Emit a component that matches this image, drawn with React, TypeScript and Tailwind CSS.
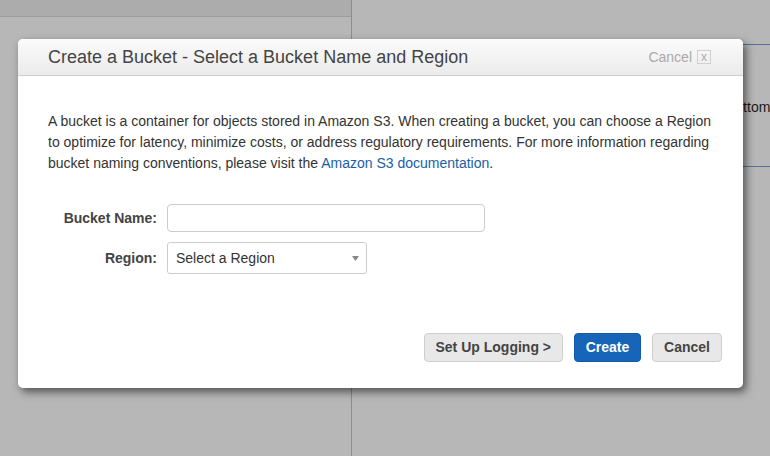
import React from "react";

export default function App() {
  return (
    <div
      className="relative w-[770px] h-[456px] overflow-hidden bg-[#b7b7b7] flex"
      style={{ fontFamily: '"Liberation Sans", Arial, sans-serif' }}
    >
      {/* background left column */}
      <div className="w-[352px] shrink-0 h-full border-r border-[#8c8c8c] flex flex-col">
        <div className="h-[17px] bg-[#acacac] border-b border-[#9c9c9c]" />
      </div>
      {/* background right column */}
      <div className="flex-1 min-w-0 pt-[44px] overflow-hidden">
        <div className="h-[123px] border-t border-b border-[#5a6f96] flex items-center pl-[374px] pt-[4px]">
          <span className="text-[14px] text-[#1a1a1a] whitespace-nowrap">Bottom</span>
        </div>
      </div>

      {/* modal overlay */}
      <div className="absolute left-[18px] top-[39px] w-[725px] h-[349px] bg-white rounded-[5px] shadow-[3px_4px_8px_rgba(0,0,0,0.55)] flex flex-col overflow-hidden">
        <div className="h-[37px] shrink-0 bg-gradient-to-b from-[#fbfbfb] to-[#ebebeb] border-b border-[#cfcfcf] flex items-center justify-between pl-[30px] pr-[32px]">
          <span className="text-[18px] text-[#444]">
            Create a Bucket - Select a Bucket Name and Region
          </span>
          <span className="flex items-center gap-[5px] text-[14px] text-[#aaa]">
            Cancel
            <span className="w-[14px] h-[14px] border border-[#d0d0d0] flex items-center justify-center text-[12px] leading-none text-[#aaa] pb-[1px]">
              x
            </span>
          </span>
        </div>
        <div className="flex-1 flex flex-col px-[30px] pt-[35px]">
          <p className="text-[14px] leading-[21px] text-[#333]">
            A bucket is a container for objects stored in Amazon S3. When creating a bucket, you can choose a Region
            to optimize for latency, minimize costs, or address regulatory requirements. For more information regarding
            bucket naming conventions, please visit the{" "}
            <span className="text-[#1a5ea8]">Amazon S3 documentation</span>.
          </p>
          <div className="mt-[30px] flex flex-col gap-[10px]">
            <div className="flex items-center gap-[10px]">
              <span className="w-[109px] text-right text-[14px] font-bold text-[#444]">Bucket Name:</span>
              <div className="w-[318px] h-[28px] border border-[#cccccc] rounded-[4px] bg-white" />
            </div>
            <div className="flex items-center gap-[10px]">
              <span className="w-[109px] text-right text-[14px] font-bold text-[#444]">Region:</span>
              <div className="w-[200px] h-[32px] border border-[#cccccc] rounded-[3px] bg-white flex items-center justify-between pl-[8px] pr-[7px]">
                <span className="text-[14px] text-[#333]">Select a Region</span>
                <svg width="7" height="5" viewBox="0 0 7 5">
                  <path d="M0 0 H7 L3.5 5 Z" fill="#888" />
                </svg>
              </div>
            </div>
          </div>
          <div className="mt-auto mb-[26px] flex justify-end gap-[11px] -mr-[9px]">
            <button className="h-[29px] px-[11px] rounded-[4px] bg-[#e8e8e8] border border-[#cfcfcf] text-[14px] font-bold text-[#444]">
              Set Up Logging &gt;
            </button>
            <button className="h-[29px] w-[67px] rounded-[4px] bg-[#1665b9] border border-[#125aa6] text-[14px] font-bold text-white">
              Create
            </button>
            <button className="h-[29px] w-[70px] rounded-[4px] bg-[#e8e8e8] border border-[#cfcfcf] text-[14px] font-bold text-[#444]">
              Cancel
            </button>
          </div>
        </div>
      </div>
    </div>
  );
}
